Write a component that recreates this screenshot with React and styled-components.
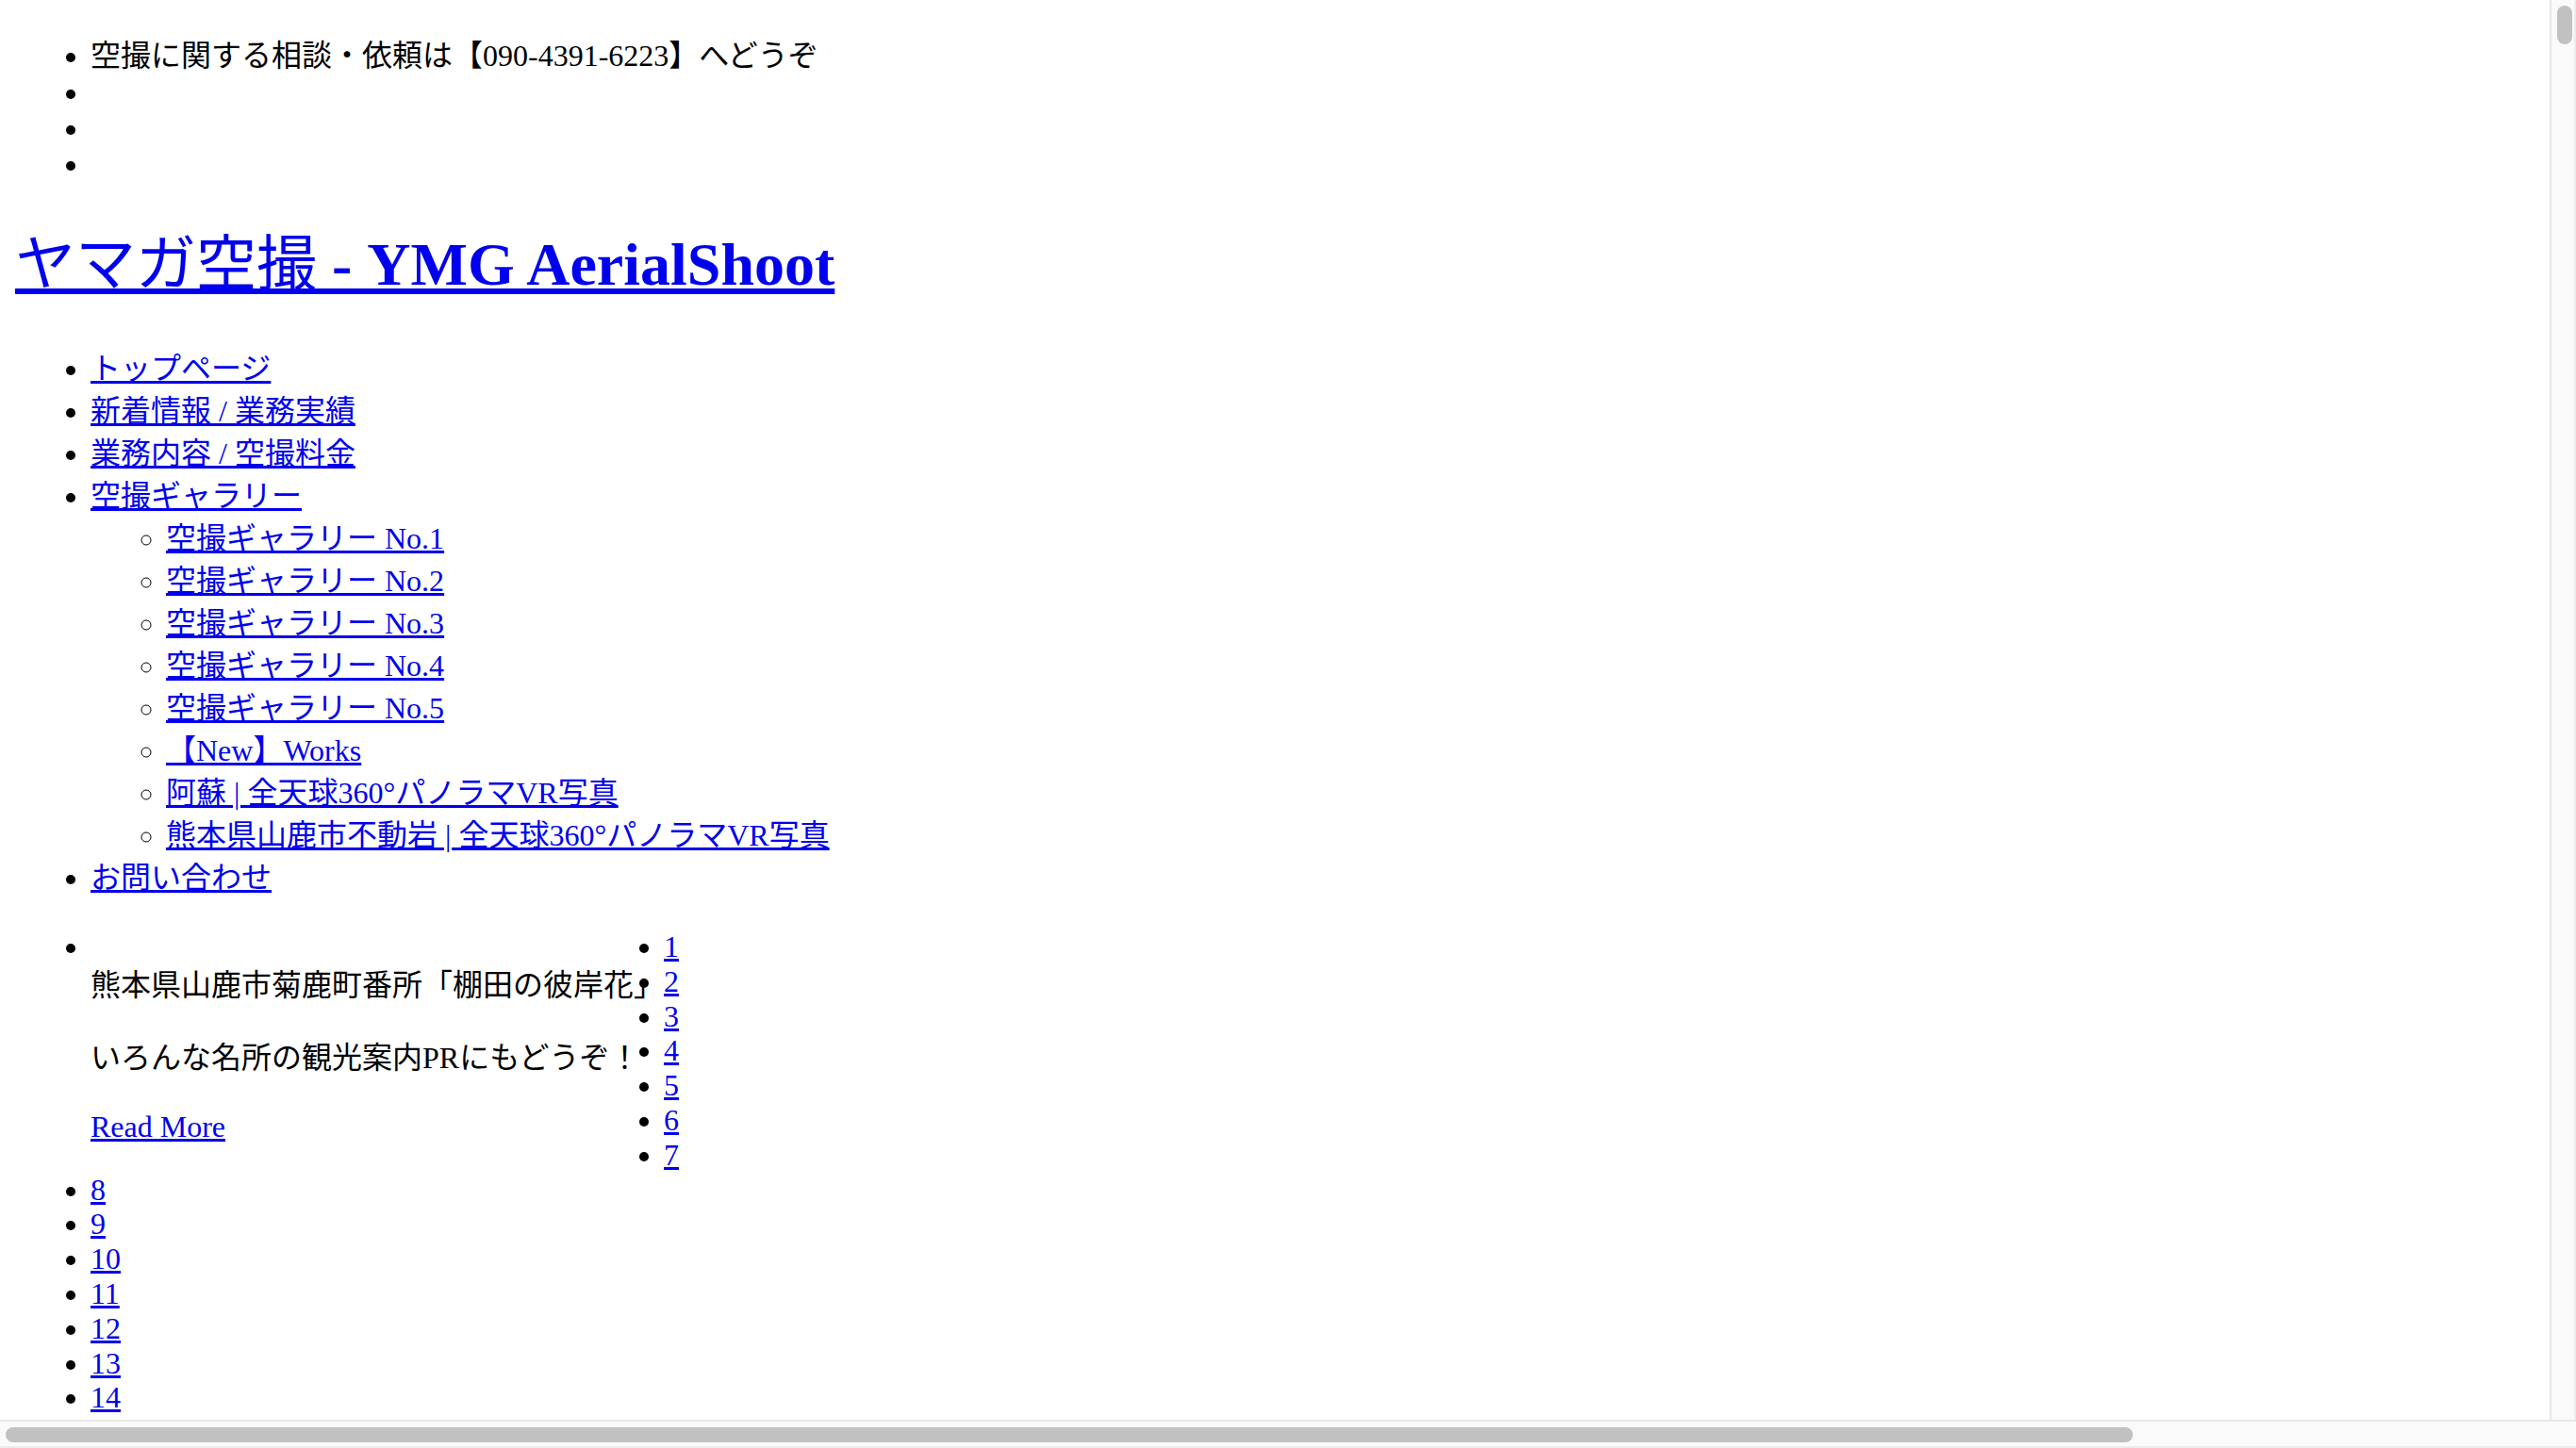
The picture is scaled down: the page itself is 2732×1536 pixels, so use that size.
import React from "react";
import styled, { createGlobalStyle } from "styled-components";

const GlobalStyle = createGlobalStyle`
  html {
    overflow: hidden;
    background: #ffffff;
  }
  body {
    margin: 16px;
    font-family: "Liberation Serif", "Noto Sans CJK JP", serif;
    font-size: 32px;
    color: #000000;
    background: #ffffff;
  }
`;

const Link = styled.a`
  color: #0000ee;
  text-decoration: underline;
`;

const InfoList = styled.ul`
  margin: 23px 0 0;
  padding-left: 80px;
  list-style: disc;
`;

const InfoItem = styled.li`
  line-height: ${(p) => (p.$tall ? "40px" : "38px")};
`;

const SiteTitle = styled.h1`
  margin: 43px 0;
  font-size: 64px;
  font-weight: bold;
  line-height: 90px;
`;

const TitleKana = styled.span`
  font-weight: normal;
`;

const NavList = styled.ul`
  margin: 43px 0 32px;
  padding-left: 80px;
  list-style: disc;
`;

const NavItem = styled.li`
  line-height: 45px;
`;

const SubNavList = styled.ul`
  margin: 0;
  padding-left: 80px;
  list-style: circle;
`;

const SlideList = styled.ul`
  margin: 32px 0;
  padding-left: 80px;
  list-style: disc;
`;

const Slide = styled.li`
  float: left;
  width: 608px;
  line-height: 36.8px;
`;

const SlideImageLine = styled.div`
  line-height: 36.8px;
`;

const Caption = styled.p`
  margin: 0 0 ${(p) => p.$gap}px;
  line-height: ${(p) => p.$lh}px;
`;

const PagerList = styled.ul`
  margin: 32px 0 0;
  padding-left: 80px;
  list-style: disc;
`;

const PagerItem = styled.li`
  line-height: 36.8px;
`;

const VScrollbar = styled.div`
  position: fixed;
  top: 0;
  right: 0;
  width: 28px;
  height: 1507px;
  background: #fafafa;
  border-left: 2px solid #e8e8e8;
  border-right: 2px solid #ececec;
  box-sizing: border-box;
`;

const VThumb = styled.div`
  margin: 6px 0 0 6px;
  width: 16px;
  height: 41px;
  border-radius: 8px;
  background: #c1c1c1;
`;

const HScrollbar = styled.div`
  position: fixed;
  left: 0;
  right: 0;
  bottom: 0;
  height: 30px;
  background: #fafafa;
  border-top: 2px solid #e8e8e8;
  border-bottom: 2px solid #ececec;
  box-sizing: border-box;
`;

const HThumb = styled.div`
  margin: 6px 0 0 6px;
  width: 2256px;
  height: 16px;
  border-radius: 8px;
  background: #c1c1c1;
`;

const gallery = [
  "空撮ギャラリー No.1",
  "空撮ギャラリー No.2",
  "空撮ギャラリー No.3",
  "空撮ギャラリー No.4",
  "空撮ギャラリー No.5",
  "【New】Works",
  "阿蘇 | 全天球360°パノラマVR写真",
  "熊本県山鹿市不動岩 | 全天球360°パノラマVR写真",
];

const pages = Array.from({ length: 14 }, (_, i) => i + 1);

export default function App() {
  return (
    <>
      <GlobalStyle />
      <InfoList>
        <InfoItem $tall>空撮に関する相談・依頼は【090-4391-6223】へどうぞ</InfoItem>
        <InfoItem>&nbsp;</InfoItem>
        <InfoItem>&nbsp;</InfoItem>
        <InfoItem>&nbsp;</InfoItem>
      </InfoList>

      <SiteTitle>
        <Link href="#">
          <TitleKana>ヤマガ空撮</TitleKana> - YMG AerialShoot
        </Link>
      </SiteTitle>

      <NavList>
        <NavItem><Link href="#">トップページ</Link></NavItem>
        <NavItem><Link href="#">新着情報 / 業務実績</Link></NavItem>
        <NavItem><Link href="#">業務内容 / 空撮料金</Link></NavItem>
        <NavItem>
          <Link href="#">空撮ギャラリー</Link>
          <SubNavList>
            {gallery.map((g) => (
              <NavItem key={g}><Link href="#">{g}</Link></NavItem>
            ))}
          </SubNavList>
        </NavItem>
        <NavItem><Link href="#">お問い合わせ</Link></NavItem>
      </NavList>

      <SlideList>
        <Slide>
          <SlideImageLine>&nbsp;</SlideImageLine>
          <Caption $lh={45} $gap={32}>熊本県山鹿市菊鹿町番所「棚田の彼岸花」</Caption>
          <Caption $lh={45} $gap={32}>いろんな名所の観光案内PRにもどうぞ！</Caption>
          <Caption $lh={36.8} $gap={16}><Link href="#">Read More</Link></Caption>
        </Slide>
      </SlideList>

      <PagerList>
        {pages.map((n) => (
          <PagerItem key={n}><Link href="#">{n}</Link></PagerItem>
        ))}
      </PagerList>

      <VScrollbar>
        <VThumb />
      </VScrollbar>
      <HScrollbar>
        <HThumb />
      </HScrollbar>
    </>
  );
}
